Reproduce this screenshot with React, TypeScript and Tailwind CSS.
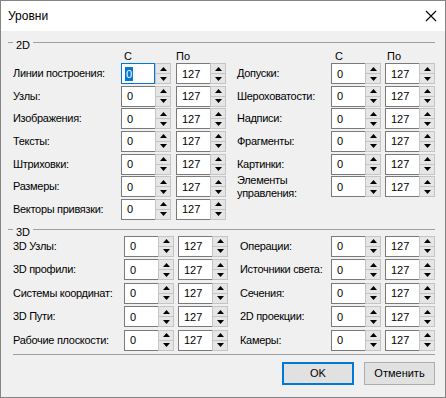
import React from "react";

type Row = { label: string; twoLine?: boolean; focused?: boolean };

const left2D: Row[] = [
  { label: "Линии построения:", focused: true },
  { label: "Узлы:" },
  { label: "Изображения:" },
  { label: "Тексты:" },
  { label: "Штриховки:" },
  { label: "Размеры:" },
  { label: "Векторы привязки:" },
];

const right2D: Row[] = [
  { label: "Допуски:" },
  { label: "Шероховатости:" },
  { label: "Надписи:" },
  { label: "Фрагменты:" },
  { label: "Картинки:" },
  { label: "Элементы управления:", twoLine: true },
];

const left3D: Row[] = [
  { label: "3D Узлы:" },
  { label: "3D профили:" },
  { label: "Системы координат:" },
  { label: "3D Пути:" },
  { label: "Рабочие плоскости:" },
];

const right3D: Row[] = [
  { label: "Операции:" },
  { label: "Источники света:" },
  { label: "Сечения:" },
  { label: "2D проекции:" },
  { label: "Камеры:" },
];

const SpinBox = ({ value, focused }: { value: string; focused?: boolean }) => (
  <div className="w-[50px] h-[21px] flex shrink-0">
    <div
      className={
        focused
          ? "w-[34px] h-full bg-white border border-[#0078d7] flex items-center pl-[3px]"
          : "w-[34px] h-full bg-white border border-r-0 border-[#7a7a7a] flex items-center pl-[5px]"
      }
    >
      {focused ? (
        <span className="bg-[#0078d7] text-white leading-[14px] px-[1px]">{value}</span>
      ) : (
        <span className="leading-[14px]">{value}</span>
      )}
    </div>
    <div className="w-[16px] h-full flex flex-col bg-[#e6e6e6] border border-[#c4c4c4]">
      <div className="flex-1 flex items-center justify-center border-b border-[#c4c4c4]">
        <svg width="7" height="4" viewBox="0 0 7 4">
          <path d="M0 4 L3.5 0 L7 4 Z" fill="#000" />
        </svg>
      </div>
      <div className="flex-1 flex items-center justify-center">
        <svg width="7" height="4" viewBox="0 0 7 4">
          <path d="M0 0 L3.5 4 L7 0 Z" fill="#000" />
        </svg>
      </div>
    </div>
  </div>
);

const GroupHeader = ({ title }: { title: string }) => (
  <div className="flex items-center h-[12px]">
    <div className="w-[5px] self-start mt-[3px] border-t border-[#a0a0a0]" />
    <span className="px-[3px] leading-[12px]">{title}</span>
    <div className="flex-1 self-start mt-[3px] border-t border-[#a0a0a0]" />
  </div>
);

const LevelRow = ({ row, labelWidth, gap }: { row: Row; labelWidth: string; gap: string }) => (
  <div className="flex items-center h-[21px]">
    <div className={`${labelWidth} shrink-0 leading-[13px] whitespace-nowrap tracking-[-0.3px]`}>
      {row.twoLine ? (
        <>
          Элементы
          <br />
          управления:
        </>
      ) : (
        row.label
      )}
    </div>
    <div className={`flex ${gap}`}>
      <SpinBox value="0" focused={row.focused} />
      <SpinBox value="127" />
    </div>
  </div>
);

export default function App() {
  return (
    <div
      className="w-[446px] h-[398px] border border-[#858585] bg-[#f0f0f0] flex flex-col text-[11px] text-black"
      style={{ fontFamily: '"Liberation Sans", Arial, sans-serif' }}
    >
      <header className="h-[30px] bg-white flex items-center pl-[7px] pr-[8px]">
        <span className="text-[12px]">Уровни</span>
        <svg className="ml-auto" width="12" height="12" viewBox="0 0 12 12">
          <path d="M1 1 L11 11 M11 1 L1 11" stroke="#000" strokeWidth="1.1" />
        </svg>
      </header>

      <main className="flex-1 flex flex-col pl-[7px] pr-[10px]">
        <section className="mt-[8px]">
          <GroupHeader title="2D" />
          <div className="flex h-[10px] items-center pl-[5px]">
            <div className="w-[111px]" />
            <span className="w-[52px]">С</span>
            <span className="w-[159px]">По</span>
            <span className="w-[52px]">С</span>
            <span>По</span>
          </div>
          <div className="flex pl-[5px] mt-[2px]">
            <div className="flex flex-col gap-[1.67px] w-[225px]">
              {left2D.map((r) => (
                <LevelRow key={r.label} row={r} labelWidth="w-[108px]" gap="gap-[5px]" />
              ))}
            </div>
            <div className="flex flex-col gap-[1.67px]">
              {right2D.map((r) => (
                <LevelRow key={r.label} row={r} labelWidth="w-[94px]" gap="gap-[4px]" />
              ))}
            </div>
          </div>
        </section>

        <section className="mt-[6px]">
          <GroupHeader title="3D" />
          <div className="flex pl-[5px] mt-[-2px]">
            <div className="flex flex-col gap-[2.5px] w-[229px]">
              {left3D.map((r) => (
                <LevelRow key={r.label} row={r} labelWidth="w-[111px]" gap="gap-[4px]" />
              ))}
            </div>
            <div className="flex flex-col gap-[2.5px]">
              {right3D.map((r) => (
                <LevelRow key={r.label} row={r} labelWidth="w-[91px]" gap="gap-[4px]" />
              ))}
            </div>
          </div>
        </section>

        <div className="mt-[3px] ml-[5px] border-t border-[#a0a0a0]" />

        <footer className="flex justify-end gap-[10px] mt-[7px]">
          <button className="w-[72px] h-[23px] bg-[#e1e1e1] border-2 border-[#0078d7] flex items-center justify-center">
            OK
          </button>
          <button className="w-[71px] h-[23px] bg-[#e1e1e1] border border-[#adadad] flex items-center justify-center">
            Отменить
          </button>
        </footer>
      </main>
    </div>
  );
}
